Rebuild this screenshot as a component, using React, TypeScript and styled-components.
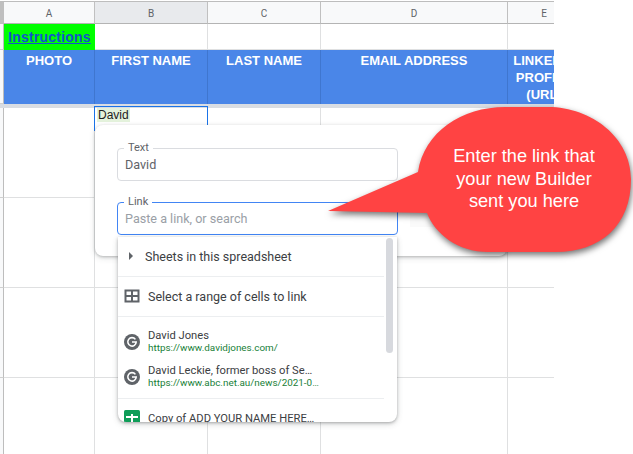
import { Fragment } from "react";
import styled, { createGlobalStyle } from "styled-components";

const GlobalStyle = createGlobalStyle`
  html, body {
    margin: 0;
    padding: 0;
    background: #fff;
    overflow: hidden;
  }
`

const Page = styled.div`
  position: relative;
  width: 633px;
  height: 454px;
  overflow: hidden;
  font-family: Roboto, sans-serif;
`

const Sheet = styled.div`
  display: grid;
  grid-template-columns: 4px 91px 113px 113px 187px 73px;
  grid-template-rows: 23px 26px 54px 4px 90px 90px 90px 90px;
  width: 554px;
  height: 454px;
  padding-top: 1px;
  box-sizing: border-box;
  overflow: hidden;
`

const Corner = styled.div`
  background: #bfbfbf;
  border-top: 1px solid #bdbdbd;
  border-bottom: 1px solid #bdbdbd;
`

const ColumnHead = styled.div<{ $active?: boolean }>`
  display: flex;
  align-items: center;
  justify-content: center;
  background: ${(p) => (p.$active ? "#e8eaed" : "#f8f9fa")};
  border-top: 1px solid #bdbdbd;
  border-bottom: 1px solid #b4b4b4;
  border-right: 1px solid #c0c0c0;
  color: #5f6368;
  font-size: 10px;
  padding-top: 1px;
  box-sizing: border-box;
`

const RowGutter = styled.div`
  background: #f8f9fa;
  border-right: 1px solid #bdbdbd;
  border-bottom: 1px solid #d0d0d0;
  box-sizing: border-box;
`

const Cell = styled.div`
  border-right: 1px solid #dfe0e1;
  border-bottom: 1px solid #dfe0e1;
  box-sizing: border-box;
`

const LinkCell = styled.div`
  display: flex;
  align-items: center;
  justify-content: center;
  background: #00ff00;
  font-family: "Liberation Sans", Arial, sans-serif;
  font-size: 14px;
  font-weight: 700;
  letter-spacing: 0.2px;
  color: #1155cc;
  text-decoration: underline;
  box-sizing: border-box;
`

const HeadCell = styled.div`
  background: #4a86e8;
  border-right: 1px solid #3f76cf;
  color: #fff;
  font-family: "Liberation Sans", Arial, sans-serif;
  font-size: 13px;
  font-weight: 700;
  line-height: 17px;
  text-align: center;
  padding-top: 2px;
  box-sizing: border-box;
`

const FrozenBand = styled.div`
  grid-column: 1 / -1;
  background: #d9dde3;
`

const SelectedCell = styled.div`
  position: absolute;
  left: 94px;
  top: 106px;
  width: 114px;
  height: 25px;
  border: 1px solid #1a73e8;
  border-bottom: 0;
  box-sizing: border-box;
  padding: 1px 0 0 2px;
  font-family: "Liberation Sans", Arial, sans-serif;
  font-size: 12px;
  line-height: 14px;
  color: #222;
`

const Highlight = styled.span`
  background: #e4f2dc;
  padding: 0 1px;
`

const Dialog = styled.div`
  position: absolute;
  left: 95px;
  top: 125px;
  width: 412px;
  height: 131px;
  display: flex;
  flex-direction: column;
  gap: 21px;
  padding: 23px 0 0 22px;
  box-sizing: border-box;
  background: #fff;
  border-radius: 8px;
  box-shadow: 0 1px 3px rgba(60, 64, 67, 0.3), 0 2px 6px rgba(60, 64, 67, 0.15);
`

const FieldRow = styled.div`
  display: flex;
  align-items: center;
  gap: 12px;
`

const Field = styled.div<{ $focused?: boolean }>`
  position: relative;
  display: flex;
  align-items: center;
  flex: none;
  width: 281px;
  height: 33px;
  padding: 0 7px;
  box-sizing: border-box;
  border: 1px solid ${(p) => (p.$focused ? "#4285f4" : "#dadce0")};
  border-radius: 4px;
  font-size: 12.6px;
  color: ${(p) => (p.$focused ? "#9aa0a6" : "#5f6368")};
`

const FieldLabel = styled.span`
  position: absolute;
  left: 6px;
  top: -8px;
  padding: 0 4px;
  background: #fff;
  font-size: 11px;
  line-height: 13px;
  color: #5f6368;
`

const ApplyButton = styled.div`
  width: 80px;
  height: 16px;
  background: #fafafa;
`

const Dropdown = styled.div`
  position: absolute;
  left: 118px;
  top: 237px;
  width: 279px;
  height: 185px;
  overflow: hidden;
  background: #fff;
  border-radius: 0 0 8px 8px;
  box-shadow: 0 1px 3px rgba(60, 64, 67, 0.35), 0 2px 6px rgba(60, 64, 67, 0.2);
`

const Scrollbar = styled.div`
  position: absolute;
  right: 4px;
  top: 1px;
  width: 7px;
  height: 115px;
  background: #d7d9de;
  border-radius: 4px;
`

const List = styled.div`
  width: 266px;
`

const ActionRow = styled.div<{ $indent: number }>`
  display: flex;
  align-items: center;
  height: 40px;
  padding: 0 0 1px ${(p) => p.$indent}px;
  box-sizing: border-box;
  border-bottom: 1px solid #eceef0;
  font-size: 12.5px;
  color: #3c4043;
`

const LinkGroup = styled.div`
  padding: 7px 0 4px;
  border-bottom: 1px solid #eceef0;
`

const LinkRow = styled.div`
  display: flex;
  align-items: center;
  gap: 8px;
  height: 35px;
  padding-left: 6px;
`

const LinkText = styled.div`
  display: flex;
  flex-direction: column;
`

const LinkTitle = styled.span`
  font-size: 11.2px;
  line-height: 13px;
  color: #3c4043;
`

const LinkUrl = styled.span`
  font-size: 9.9px;
  line-height: 12px;
  color: #188038;
`

const FileRow = styled.div`
  display: flex;
  align-items: center;
  gap: 8px;
  height: 32px;
  padding: 6px 0 0 6px;
  box-sizing: border-box;
  font-size: 11.2px;
  color: #3c4043;
`

const Callout = styled.div`
  position: absolute;
  left: 320px;
  top: 100px;
  width: 313px;
  height: 165px;
`

const CalloutShape = styled.svg`
  display: block;
  overflow: visible;
  filter: drop-shadow(1px 3px 3px rgba(0, 0, 0, 0.55));
`

const CalloutText = styled.div`
  position: absolute;
  left: 100px;
  top: 45px;
  width: 208px;
  color: #fff;
  font-family: "Liberation Sans", Arial, sans-serif;
  font-size: 18.2px;
  line-height: 22.5px;
  text-align: center;
`

const columns = ["A", "B", "C", "D", "E"]
const headings = ["PHOTO", "FIRST NAME", "LAST NAME", "EMAIL ADDRESS", "LINKEDIN PROFILE (URL)"]
const dataRows = [3, 4, 5, 6]

function GoogleIcon() {
  return (
    <svg width="16" height="16" viewBox="0 0 16 16">
      <circle cx="8" cy="8" r="8" fill="#5f6368" />
      <path d="M11.4 5.4A4.2 4.2 0 1 0 12.2 8H8" fill="none" stroke="#fff" strokeWidth="1.6" />
    </svg>
  )
}

function App() {
  return (
    <Page>
      <GlobalStyle />
      <Sheet>
        <Corner />
        {columns.map((each) => (
          <ColumnHead key={each} $active={each === "B"}>{each}</ColumnHead>
        ))}

        <RowGutter />
        <LinkCell>Instructions</LinkCell>
        {columns.slice(1).map((each) => <Cell key={each} />)}

        <RowGutter />
        {headings.map((each) => <HeadCell key={each}>{each}</HeadCell>)}

        <FrozenBand />

        {dataRows.map((row) => (
          <Fragment key={row}>
            <RowGutter />
            {columns.map((each) => <Cell key={each} />)}
          </Fragment>
        ))}
      </Sheet>

      <SelectedCell><Highlight>David</Highlight></SelectedCell>

      <Dialog>
        <FieldRow>
          <Field>
            <FieldLabel>Text</FieldLabel>
            David
          </Field>
        </FieldRow>
        <FieldRow>
          <Field $focused>
            <FieldLabel>Link</FieldLabel>
            Paste a link, or search
          </Field>
          <ApplyButton />
        </FieldRow>
      </Dialog>

      <Dropdown>
        <Scrollbar />
        <List>
          <ActionRow $indent={11}>
            <svg width="16" height="8" viewBox="0 0 16 8">
              <path d="M0 0L4 4L0 8Z" fill="#5f6368" />
            </svg>
            Sheets in this spreadsheet
          </ActionRow>
          <ActionRow $indent={6}>
            <svg width="16" height="16" viewBox="0 0 16 16" style={{ marginRight: 8 }}>
              <path d="M1.5 2.5H14.5V13.5H1.5ZM1.5 8H14.5M8 2.5V13.5" fill="none" stroke="#5f6368" strokeWidth="2" />
            </svg>
            Select a range of cells to link
          </ActionRow>
          <LinkGroup>
            <LinkRow>
              <GoogleIcon />
              <LinkText>
                <LinkTitle>David Jones</LinkTitle>
                <LinkUrl>https://www.davidjones.com/</LinkUrl>
              </LinkText>
            </LinkRow>
            <LinkRow>
              <GoogleIcon />
              <LinkText>
                <LinkTitle>David Leckie, former boss of Se…</LinkTitle>
                <LinkUrl>https://www.abc.net.au/news/2021-0…</LinkUrl>
              </LinkText>
            </LinkRow>
          </LinkGroup>
          <FileRow>
            <svg width="16" height="16" viewBox="0 0 16 16">
              <rect width="16" height="16" rx="1.5" fill="#0f9d58" />
              <path d="M2 7H14M8 4V16" stroke="#fff" strokeWidth="2" />
            </svg>
            Copy of ADD YOUR NAME HERE…
          </FileRow>
        </List>
      </Dropdown>

      <Callout>
        <CalloutShape width="313" height="165" viewBox="320 100 313 165">
          <path
            d="M328 211L418 172C424 132 462 107 505 107L548 107C592 107 631 138 631 179C631 226 600 252 556 252L488 252C458 252 435 234 427 213Z"
            fill="#ff4343"
          />
        </CalloutShape>
        <CalloutText>
          Enter the link that<br />your new Builder<br />sent you here
        </CalloutText>
      </Callout>
    </Page>
  )
}

export default App;
